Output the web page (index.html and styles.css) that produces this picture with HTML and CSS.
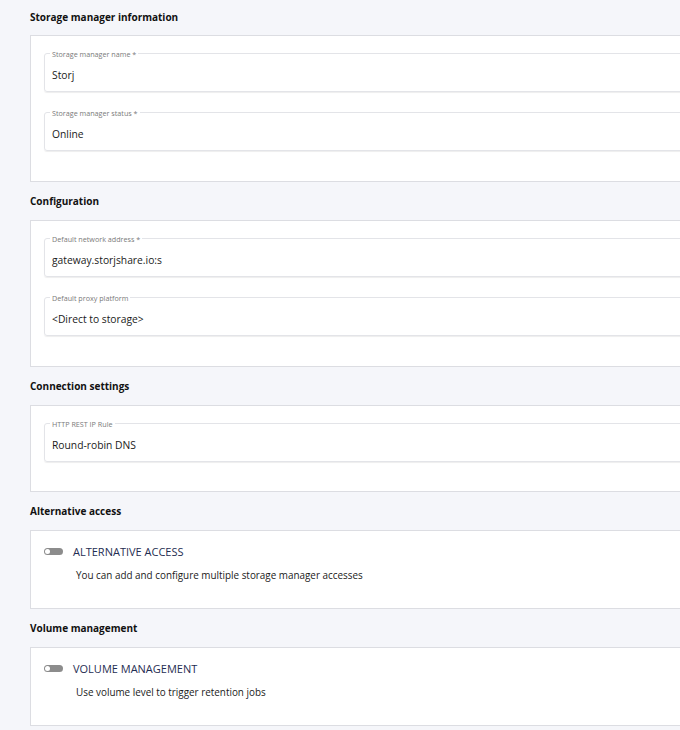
FILE: index.html
```html
<!DOCTYPE html>
<html lang="en">
<head>
    <meta charset="UTF-8">
    <title>Storage manager</title>
    <link rel="stylesheet" href="styles.css">
</head>
<body>
    <div class="page">
        <section class="section">
            <h2>Storage manager information</h2>
            <div class="card">
                <div class="field">
                    <span class="field-label">Storage manager name *</span>
                    <span class="field-value">Storj</span>
                </div>
                <div class="field">
                    <span class="field-label">Storage manager status *</span>
                    <span class="field-value">Online</span>
                </div>
            </div>
        </section>

        <section class="section">
            <h2>Configuration</h2>
            <div class="card">
                <div class="field">
                    <span class="field-label">Default network address *</span>
                    <span class="field-value">gateway.storjshare.io:s</span>
                </div>
                <div class="field">
                    <span class="field-label">Default proxy platform</span>
                    <span class="field-value">&lt;Direct to storage&gt;</span>
                </div>
            </div>
        </section>

        <section class="section">
            <h2>Connection settings</h2>
            <div class="card card-single">
                <div class="field">
                    <span class="field-label">HTTP REST IP Rule</span>
                    <span class="field-value">Round-robin DNS</span>
                </div>
            </div>
        </section>

        <section class="section">
            <h2>Alternative access</h2>
            <div class="card card-toggle">
                <div class="toggle-row">
                    <span class="switch"><span class="knob"></span></span>
                    <span class="toggle-title">ALTERNATIVE ACCESS</span>
                </div>
                <p class="toggle-desc">You can add and configure multiple storage manager accesses</p>
            </div>
        </section>

        <section class="section">
            <h2>Volume management</h2>
            <div class="card card-toggle">
                <div class="toggle-row">
                    <span class="switch"><span class="knob"></span></span>
                    <span class="toggle-title">VOLUME MANAGEMENT</span>
                </div>
                <p class="toggle-desc">Use volume level to trigger retention jobs</p>
            </div>
        </section>
    </div>
</body>
</html>
```

FILE: styles.css
```css
body {
    margin: 0;
    padding: 0;
    background: #f5f6fa;
    font-family: 'Open Sans', sans-serif;
    color: #1a1a1a;
    overflow: hidden;
}
.page {
    padding: 9px 0 0 30px;
}
.section h2 {
    font-size: 10px;
    font-weight: 700;
    line-height: 16px;
    margin: 0 0 10px;
    color: #111;
}
.section + .section h2 {
    margin-top: 11px;
    margin-bottom: 11px;
}
.card {
    width: 720px;
    background: #fff;
    border: 1px solid #dcdde2;
    padding: 17px 13px 30px;
    display: flex;
    flex-direction: column;
    gap: 20px;
}
.card-single {
    padding-bottom: 29px;
}
.field {
    position: relative;
    height: 39px;
    box-sizing: border-box;
    border: 1px solid #e3e4e8;
    border-radius: 3px;
    box-shadow: 0 1px 1px rgba(0, 0, 0, 0.07);
    padding: 5px 0 0 7px;
    display: flex;
    align-items: center;
}
.field-label {
    position: absolute;
    top: -4px;
    left: 5px;
    padding: 0 2px;
    background: #fff;
    font-size: 7.2px;
    line-height: 8px;
    color: #7a7a7a;
}
.field-value {
    font-size: 10.3px;
    color: #1a1a1a;
}
.card-toggle {
    padding: 13px 13px 26px;
    gap: 10px;
}
.toggle-row {
    display: flex;
    align-items: center;
    height: 14px;
}
.switch {
    width: 19px;
    height: 7px;
    border-radius: 4px;
    background: #8c8c8c;
    display: flex;
    align-items: center;
    padding: 0 1px;
    box-sizing: border-box;
}
.knob {
    width: 5px;
    height: 5px;
    border-radius: 50%;
    background: #fff;
}
.toggle-title {
    margin-left: 10px;
    font-size: 11px;
    color: #1f2d52;
}
.toggle-desc {
    margin: 0 0 0 32px;
    font-size: 9.9px;
    line-height: 14px;
    color: #1a1a1a;
}
```
